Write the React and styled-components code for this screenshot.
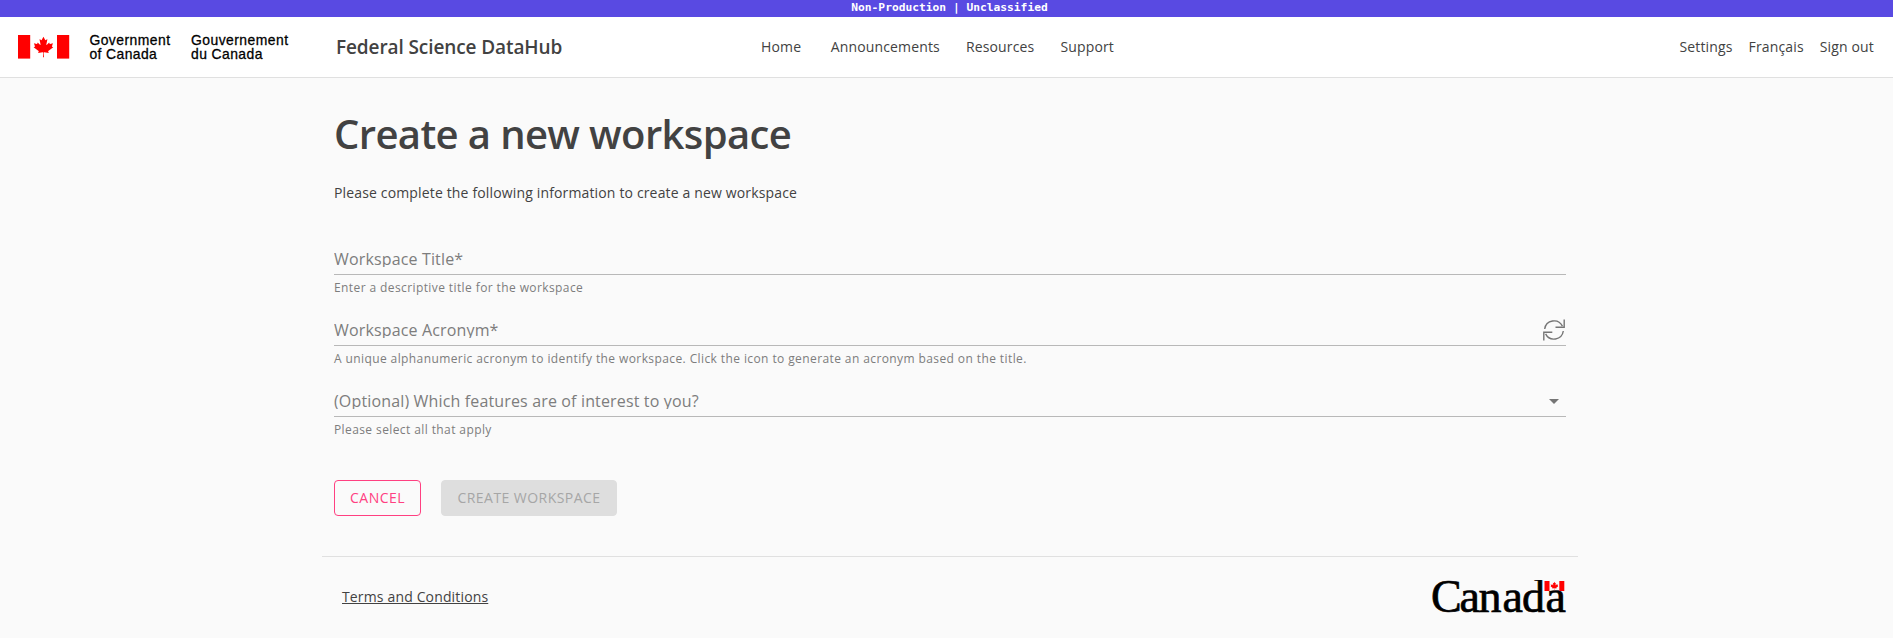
import React from 'react';
import styled, { createGlobalStyle } from 'styled-components';

const Global = createGlobalStyle`
  * { box-sizing: border-box; }
  body { margin: 0; background: #fafafa; color: #424242; font: 400 14px/20px "Open Sans", sans-serif; }
`;

const Banner = styled.div`
  height: 17px;
  padding-left: 6px;
  background: #594ae2;
  color: #fff;
  text-align: center;
  font: 700 11.25px/15px "DejaVu Sans Mono", monospace;
`;

const Header = styled.header`
  display: grid;
  grid-template-columns: 336px 425px 1fr auto;
  align-items: center;
  height: 61px;
  padding: 0 19px 0 0;
  background: #fff;
  border-bottom: 1px solid #e0e0e0;
`;

const Brand = styled.div`
  padding-left: 18px;
  svg { display: block; }
`;

const SiteName = styled.div`
  font-size: 19px;
  font-weight: 600;
  line-height: 30px;
  letter-spacing: -0.1px;
`;

const Nav = styled.nav`
  display: flex;
  gap: ${(p) => p.$gap}px;
`;

const NavLink = styled.a`
  margin-right: ${(p) => (p.$lead ? '3.5px' : 0)};
  color: #424242;
  text-decoration: none;
  white-space: nowrap;
  letter-spacing: 0.15px;
`;

const Container = styled.div`
  width: 1256px;
  margin-left: 322px;
`;

const Main = styled.main`
  padding: 30px 12px 0;
`;

const Title = styled.h1`
  margin: 0;
  font-size: 40px;
  font-weight: 600;
  line-height: 52px;
  letter-spacing: -0.62px;
`;

const Intro = styled.p`
  margin: 23px 0 38px;
  letter-spacing: 0.15px;
`;

const Field = styled.div`
  height: 71px;
`;

const Control = styled.div`
  display: flex;
  justify-content: space-between;
  height: 34px;
  padding-top: 10px;
  border-bottom: 1px solid #b8b8b8;
`;

const Label = styled.label`
  height: 16px;
  overflow: hidden;
  font-size: 16px;
  line-height: 16px;
  font-weight: 400;
  letter-spacing: 0.15px;
  color: #7d7d7d;
`;

const Adornment = styled.span`
  flex: none;
  width: 24px;
  height: 24px;
  margin-top: -4px;
  color: #757575;
  svg { display: block; }
`;

const Helper = styled.div`
  padding-top: 3px;
  font-size: 12px;
  line-height: 20px;
  letter-spacing: 0.4px;
  color: #7d7d7d;
`;

const Actions = styled.div`
  display: flex;
  gap: 20px;
  margin-top: 26px;
`;

const Button = styled.button`
  width: ${(p) => p.$width}px;
  height: 36px;
  padding: 0;
  border: 1px solid ${(p) => (p.disabled ? '#dedede' : '#ff4081')};
  border-radius: 4px;
  background: ${(p) => (p.disabled ? '#dedede' : 'transparent')};
  color: ${(p) => (p.disabled ? '#a6a6a6' : '#ff4081')};
  font: 400 14px/24px "Open Sans", sans-serif;
  letter-spacing: 0.45px;
  text-transform: uppercase;
`;

const Footer = styled.footer`
  display: flex;
  justify-content: space-between;
  align-items: flex-start;
  margin-top: 40px;
  padding: 23px 10px 0 20px;
  border-top: 1px solid #e0e0e0;
`;

const Terms = styled.a`
  margin-top: 7px;
  color: #424242;
  text-decoration: underline;
  letter-spacing: 0.15px;
`;

const LEAF =
  'm4890 4430-45-863a95 95 0 0 1 111-98l859 151-116-320a65 65 0 0 1 20-73l941-762-212-99a65 65 0 0 1-34-79l186-572-542 115a65 65 0 0 1-73-38l-105-247-423 454a65 65 0 0 1-111-57l204-1052-327 189a65 65 0 0 1-91-27l-332-652-332 652a65 65 0 0 1-91 27l-327-189 204 1052a65 65 0 0 1-111 57l-423-454-105 247a65 65 0 0 1-73 38l-542-115 186 572a65 65 0 0 1-34 79l-212 99 941 762a65 65 0 0 1 20 73l-116 320 859-151a95 95 0 0 1 111 98l-45 863z';

function GovernmentLogo() {
  return (
    <svg width="280" height="30" viewBox="0 0 280 30">
      <g fill="#f00">
        <rect x="0" y="3" width="12.2" height="23.6" />
        <rect x="39" y="3" width="12.2" height="23.6" />
        <path d={LEAF} transform="translate(.1 2.6) scale(.00528 .0051)" />
      </g>
      <g fontFamily="Liberation Sans, sans-serif" fontSize="13.9" fill="#000" stroke="#000" strokeWidth=".28">
        <text x="71.4" y="13" textLength="80.6">Government</text>
        <text x="71.4" y="27" textLength="67.4">of Canada</text>
        <text x="173" y="13" textLength="97">Gouvernement</text>
        <text x="173" y="27" textLength="71.4">du Canada</text>
      </g>
    </svg>
  );
}

function CanadaWordmark() {
  return (
    <svg width="138" height="36" viewBox="0 0 138 36">
      <text x="1 29.5 48.5 72.5 92 115.5" y="32.2" fontFamily="Liberation Serif, serif" fontSize="46" fill="#000" stroke="#000" strokeWidth=".7">
        Canada
      </text>
      <g fill="#f00">
        <rect x="114.5" y="1" width="5" height="10" />
        <rect x="129.3" y="1" width="5" height="10" />
        <path d={LEAF} transform="translate(114.4 1) scale(.00208)" />
      </g>
    </svg>
  );
}

function RefreshIcon() {
  return (
    <svg width="24" height="24" viewBox="0 0 24 24" fill="none" stroke="currentColor" strokeWidth="1.4">
      <path d="M2.7 11A9.4 9.4 0 0 1 20.4 8.1M21.3 13A9.4 9.4 0 0 1 3.6 15.9" />
      <path d="M22.2 1.5V9.3H13.5M1.8 22.5V14.3H10.3" />
    </svg>
  );
}

function ArrowIcon() {
  return (
    <svg width="24" height="24" viewBox="0 0 24 24" fill="currentColor">
      <path d="M7 10l5 5 5-5z" />
    </svg>
  );
}

function FormField({ label, helper, icon }) {
  return (
    <Field>
      <Control>
        <Label>{label}</Label>
        {icon && <Adornment>{icon}</Adornment>}
      </Control>
      <Helper>{helper}</Helper>
    </Field>
  );
}

export default function App() {
  return (
    <>
      <Global />
      <Banner>Non-Production | Unclassified</Banner>
      <Header>
        <Brand><GovernmentLogo /></Brand>
        <SiteName>Federal Science DataHub</SiteName>
        <Nav $gap={26}>
          <NavLink $lead>Home</NavLink>
          <NavLink>Announcements</NavLink>
          <NavLink>Resources</NavLink>
          <NavLink>Support</NavLink>
        </Nav>
        <Nav $gap={16}>
          <NavLink>Settings</NavLink>
          <NavLink>Français</NavLink>
          <NavLink>Sign out</NavLink>
        </Nav>
      </Header>
      <Container>
        <Main>
          <Title>Create a new workspace</Title>
          <Intro>Please complete the following information to create a new workspace</Intro>
          <FormField label="Workspace Title*" helper="Enter a descriptive title for the workspace" />
          <FormField
            label="Workspace Acronym*"
            helper="A unique alphanumeric acronym to identify the workspace. Click the icon to generate an acronym based on the title."
            icon={<RefreshIcon />}
          />
          <FormField
            label="(Optional) Which features are of interest to you?"
            helper="Please select all that apply"
            icon={<ArrowIcon />}
          />
          <Actions>
            <Button $width={87}>Cancel</Button>
            <Button $width={176} disabled>Create workspace</Button>
          </Actions>
        </Main>
        <Footer>
          <Terms>Terms and Conditions</Terms>
          <CanadaWordmark />
        </Footer>
      </Container>
    </>
  );
}
